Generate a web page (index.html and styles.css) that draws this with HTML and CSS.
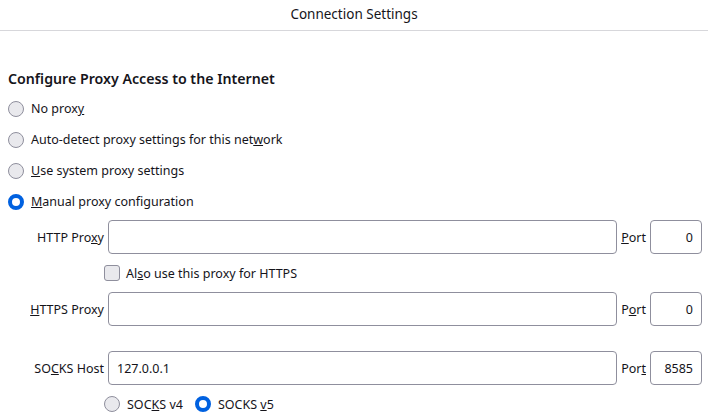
FILE: index.html
```html
<!DOCTYPE html>
<html lang="en">
<head>
  <meta charset="UTF-8" />
  <title>Connection Settings</title>
  <link rel="stylesheet" href="styles.css">
</head>
<body>

<div class="titlebar">Connection Settings</div>

<div class="content">
  <h2>Configure Proxy Access to the Internet</h2>

  <div class="choices">
    <label class="choice"><input type="radio" name="proxy"> <span>No prox<u>y</u></span></label>
    <label class="choice"><input type="radio" name="proxy"> <span>Auto-detect proxy settings for this net<u>w</u>ork</span></label>
    <label class="choice"><input type="radio" name="proxy"> <span><u>U</u>se system proxy settings</span></label>
    <label class="choice"><input type="radio" name="proxy" checked> <span><u>M</u>anual proxy configuration</span></label>
  </div>

  <div class="manual">
    <label class="field-label" for="httpHost">HTTP Pro<u>x</u>y</label>
    <input type="text" id="httpHost" class="text-box">
    <label class="port-label" for="httpPort"><u>P</u>ort</label>
    <input type="text" id="httpPort" class="text-box port" value="0">

    <label class="check-row">
      <input type="checkbox"> <span>Al<u>s</u>o use this proxy for HTTPS</span>
    </label>

    <label class="field-label" for="sslHost"><u>H</u>TTPS Proxy</label>
    <input type="text" id="sslHost" class="text-box">
    <label class="port-label" for="sslPort">P<u>o</u>rt</label>
    <input type="text" id="sslPort" class="text-box port" value="0">

    <div class="spacer"></div>

    <label class="field-label" for="socksHost">SO<u>C</u>KS Host</label>
    <input type="text" id="socksHost" class="text-box" value="127.0.0.1">
    <label class="port-label" for="socksPort">Por<u>t</u></label>
    <input type="text" id="socksPort" class="text-box port" value="8585">

    <div class="socks-version">
      <label class="choice"><input type="radio" name="socks"> <span>SOC<u>K</u>S v4</span></label>
      <label class="choice"><input type="radio" name="socks" checked> <span>SOCKS <u>v</u>5</span></label>
    </div>
  </div>
</div>

</body>
</html>
```

FILE: styles.css
```css
html, body {
  margin: 0;
  padding: 0;
  background: #fff;
  color: #15141a;
  font-family: "Noto Sans", "Open Sans", sans-serif;
  font-size: 12.5px;
}
.titlebar {
  height: 30px;
  line-height: 28px;
  font-size: 13.5px;
  text-align: center;
  border-bottom: 1px solid #d7d7db;
}
.content {
  padding: 0 6px 0 8px;
}
h2 {
  margin: 38px 0 0 0;
  font-size: 14.2px;
  line-height: 20px;
  font-weight: 600;
}
.choices {
  margin-top: 4px;
}
.choice {
  display: flex;
  align-items: center;
  height: 31px;
}
.choice span {
  margin-left: 7px;
}
input[type=radio] {
  appearance: none;
  margin: 0;
  width: 16px;
  height: 16px;
  border: 1px solid #8f8f9d;
  border-radius: 50%;
  background: #e9e9ed;
  box-sizing: border-box;
}
input[type=radio]:checked {
  border: 4px solid #0061e0;
  background: #fff;
}
input[type=checkbox] {
  appearance: none;
  margin: 0;
  width: 16px;
  height: 16px;
  border: 1px solid #8f8f9d;
  border-radius: 3px;
  background: #e9e9ed;
  box-sizing: border-box;
}
.manual {
  margin-top: 3px;
  display: grid;
  grid-template-columns: 96px 1fr auto 52px;
  grid-template-rows: 34px 38px 34px 25px 34px 38px;
  column-gap: 4px;
  align-items: center;
}
.field-label {
  text-align: right;
}
.text-box {
  height: 34px;
  box-sizing: border-box;
  border: 1px solid #8f8f9d;
  border-radius: 4px;
  padding: 0 8px;
  font: inherit;
  color: inherit;
  background: #fff;
}
.text-box.port {
  width: 52px;
  text-align: right;
}
.check-row {
  grid-column: 2 / 5;
  margin-left: -4px;
  display: flex;
  align-items: center;
}
.check-row span {
  margin-left: 6px;
}
.spacer {
  grid-column: 1 / 5;
}
.socks-version {
  grid-column: 2 / 5;
  margin-left: -4px;
  display: flex;
  gap: 12px;
}
.socks-version .choice {
  height: 38px;
}
```
